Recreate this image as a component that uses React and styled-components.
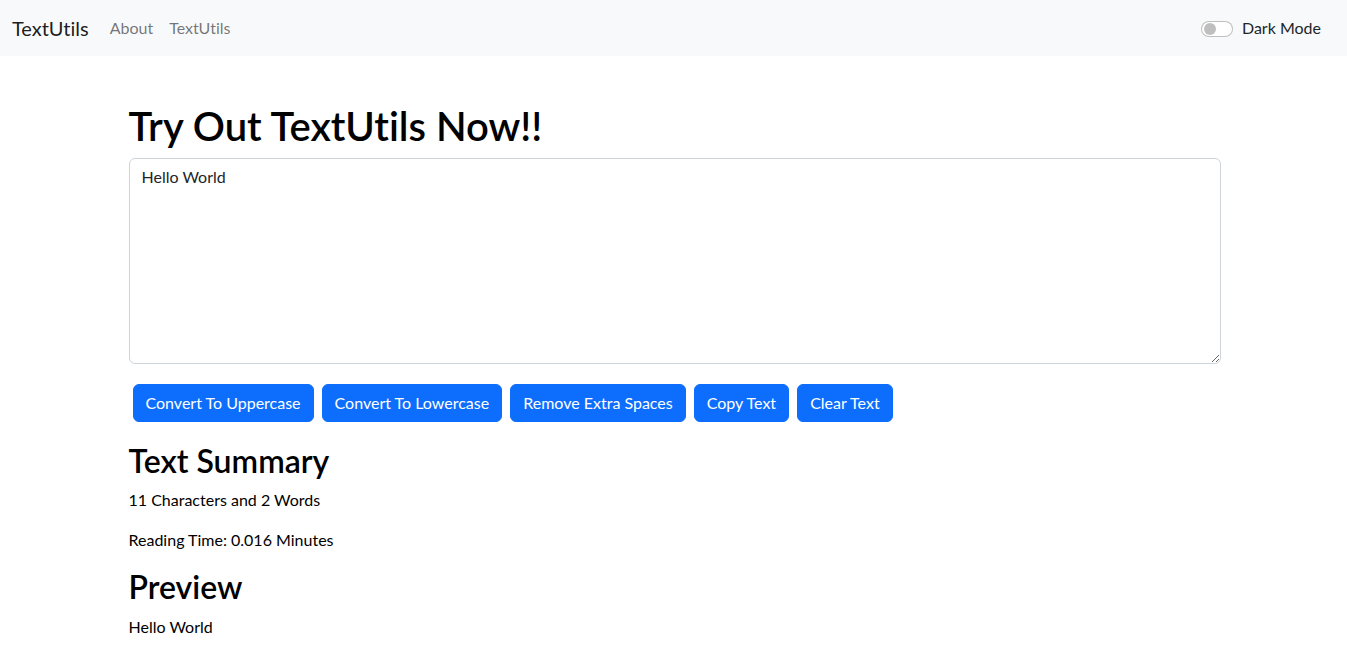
import React, { useState } from "react";
import styled, { createGlobalStyle } from "styled-components";

const GlobalStyle = createGlobalStyle`
  *, *::before, *::after { box-sizing: border-box; }
  body {
    margin: 0;
    background: #fff;
    color: #212529;
    font-family: Lato, "Liberation Sans", sans-serif;
    font-size: 16px;
    line-height: 1.5;
    font-variant-ligatures: none;
  }
`;

const Navbar = styled.nav`
  height: 56px;
  background: #f8f9fa;
  display: flex;
  align-items: center;
  padding: 0 26px 0 12px;
`;

const Brand = styled.a`
  font-size: 20px;
  line-height: 30px;
  color: rgba(0, 0, 0, 0.9);
  text-decoration: none;
  margin-right: 13px;
`;

const NavList = styled.ul`
  list-style: none;
  display: flex;
  margin: 0;
  padding: 0;
  flex: 1;
`;

const NavLink = styled.a`
  display: block;
  padding: 8px;
  color: rgba(0, 0, 0, 0.55);
  text-decoration: none;
`;

const SwitchWrap = styled.label`
  display: flex;
  align-items: center;
  gap: 9px;
  color: #212529;
`;

const SwitchTrack = styled.span`
  width: 32px;
  height: 16px;
  border: 1px solid rgba(0, 0, 0, 0.25);
  border-radius: 16px;
  background: #fff;
  display: flex;
  align-items: center;
  padding: 0 2px;
  margin-top: 1px;
`;

const SwitchKnob = styled.span`
  width: 12px;
  height: 12px;
  border-radius: 50%;
  background: #bfbfbf;
`;

const Main = styled.main`
  width: 1092px;
  margin-left: calc(50% - 545px);
`;

const Section = styled.section`
  padding-top: ${p => p.$top}px;
`;

const Title = styled.h1`
  font-size: 40px;
  font-weight: 600;
  line-height: 1.2;
  margin: 0 0 8px;
  color: #000;
`;

const Heading = styled.h2`
  font-size: 32px;
  font-weight: 600;
  line-height: 1.2;
  margin: 0 0 8px;
  color: #000;
`;

const TextArea = styled.textarea`
  display: block;
  width: 100%;
  height: 206px;
  padding: 6px 12px;
  font: inherit;
  line-height: 1.5;
  color: #212529;
  border: 1px solid #ced4da;
  border-radius: 6px;
  margin: 0 0 16px;
  resize: vertical;
  outline: none;
`;

const ButtonRow = styled.div`
  display: flex;
  padding: 4px 0 4px 4px;
  gap: 8px;
`;

const Button = styled.button`
  font: inherit;
  line-height: 1.5;
  height: 38px;
  padding: 6px 12px;
  color: #fff;
  background: #0d6efd;
  border: 1px solid #0d6efd;
  border-radius: 6px;
  cursor: pointer;
`;

const Para = styled.p`
  margin: 0 0 16px;
  color: #000;
`;

export default function App() {
  const [text] = useState("Hello World");
  const words = text.split(/\s+/).filter(Boolean).length;
  return (
    <>
      <GlobalStyle />
      <Navbar>
        <Brand href="#">TextUtils</Brand>
        <NavList>
          <li><NavLink href="#">About</NavLink></li>
          <li><NavLink href="#">TextUtils</NavLink></li>
        </NavList>
        <SwitchWrap>
          <SwitchTrack><SwitchKnob /></SwitchTrack>
          Dark Mode
        </SwitchWrap>
      </Navbar>
      <Main>
        <Section $top={46}>
          <Title>Try Out TextUtils Now!!</Title>
          <TextArea defaultValue={text} />
          <ButtonRow>
            <Button>Convert To Uppercase</Button>
            <Button>Convert To Lowercase</Button>
            <Button>Remove Extra Spaces</Button>
            <Button>Copy Text</Button>
            <Button>Clear Text</Button>
          </ButtonRow>
        </Section>
        <Section $top={16}>
          <Heading>Text Summary</Heading>
          <Para>{text.length} Characters and {words} Words</Para>
          <Para>Reading Time: {(0.008 * words).toFixed(3)} Minutes</Para>
          <Heading>Preview</Heading>
          <Para>{text}</Para>
        </Section>
      </Main>
    </>
  );
}
